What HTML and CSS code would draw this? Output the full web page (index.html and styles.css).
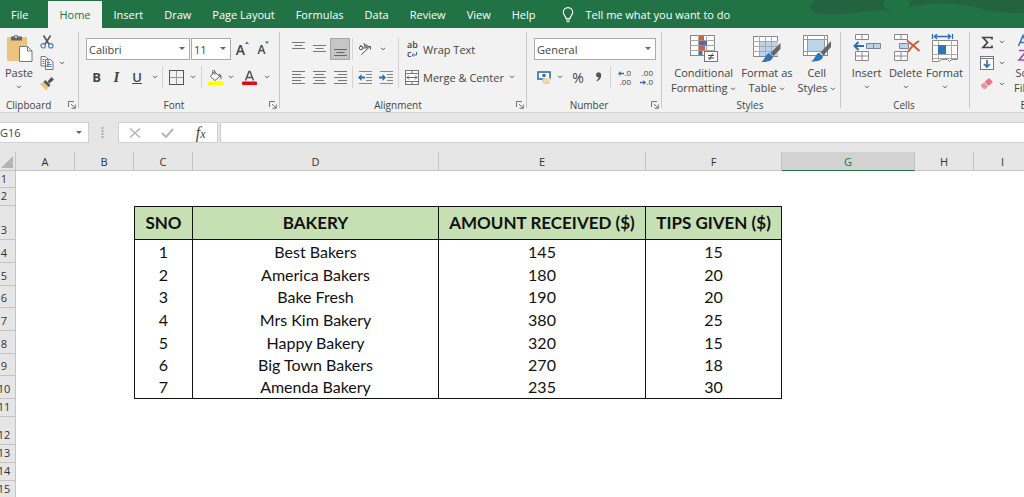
FILE: index.html
```html
<!DOCTYPE html>
<html lang="en">
<head>
<meta charset="utf-8">
<title>Bakery workbook</title>
<link rel="stylesheet" href="styles.css">
</head>
<body>
<svg class="defs" aria-hidden="true">
  <symbol id="chev" viewBox="0 0 6 4"><path d="M1 .8l2 2 2-2" fill="none" stroke="#555"/></symbol>
  <symbol id="launch" viewBox="0 0 8 8"><path d="M.5 6V.5H6M3 3l4 4M7.300 3.500v3.800H3.500" fill="none" stroke="#666" stroke-width=".9"/></symbol>
</svg>

<header class="topbar">
  <svg class="clouds" viewBox="0 0 250 28" aria-hidden="true"><path d="M40 0h70c1 2-2 4 0 6s4 4 8 5c-14-1-26 0-40 2-14 2-30 2-36 0-6-3-2-5-8-7 4-1 5-3 6-6z" fill="#23633f"/><path d="M136 0h114v13c-20 0-34-2-50-6-22-5-46-5-66 1 1-3 2-5 2-8z" fill="#23633f"/></svg>
  <nav class="tabs">
    <button class="tab tab-file">File</button>
    <button class="tab tab-active">Home</button>
    <button class="tab">Insert</button>
    <button class="tab">Draw</button>
    <button class="tab">Page Layout</button>
    <button class="tab">Formulas</button>
    <button class="tab">Data</button>
    <button class="tab">Review</button>
    <button class="tab">View</button>
    <button class="tab">Help</button>
    <button class="tab tell"><svg width="12" height="16" viewBox="0 0 12 16" fill="none" stroke="#fff" stroke-width="1.100"><path d="M4 11.500C4 9 1.300 8.500 1.300 5.300a4.700 4.700 0 0 1 9.400 0C10.700 8.500 8 9 8 11.500zM4 13h4M4.600 14.800h2.800"/></svg><span>Tell me what you want to do</span></button>
  </nav>
</header>

<section class="ribbon" aria-label="Home ribbon">
  <div class="group g-clip">
    <div class="body clip">
      <button class="big">
        <svg width="28" height="28" viewBox="0 0 28 28"><rect x="2" y="3" width="20" height="24" rx="1" fill="#ecc47f"/><path d="M6 2.500h2.500a2.800 2.800 0 0 1 5 0H17v4H6z" fill="#666"/><circle cx="11" cy="3" r="1.100" fill="#eee"/><path d="M14.500 12.500h8l4.500 4.500v10.500H14.500z" fill="#fff" stroke="#777"/><path d="M22.500 12.500V17H27" fill="none" stroke="#777"/></svg>
        <span>Paste</span><svg class="chev"><use href="#chev"/></svg>
      </button>
      <div class="clip-tools">
        <button class="ico" aria-label="Cut"><svg width="14" height="14" viewBox="0 0 14 14" fill="none"><path d="M3.500 .5l5.700 9M10.500 .5l-5.700 9" stroke="#555" stroke-width="1.600"/><circle cx="3.200" cy="10.800" r="2.200" stroke="#4b7fc0" stroke-width="1.200"/><circle cx="10.800" cy="10.800" r="2.200" stroke="#4b7fc0" stroke-width="1.200"/></svg></button>
        <span class="split"><button class="ico" aria-label="Copy"><svg width="14" height="14" viewBox="0 0 14 14" fill="#f8f8f8" stroke="#777"><path d="M1 .5h4.500L8 3v7H1zM5.500 3.500h5L13 6v7.500H5.500z"/><path d="M2.500 3.500h2M2.500 5.500h2M2.500 7.500h2M7 6.500h3M7 8.500h4.500M7 10.500h4.500" stroke="#5d83b5"/></svg></button><button class="drop" aria-label="Copy options"><svg class="chev"><use href="#chev"/></svg></button></span>
        <button class="ico" aria-label="Format painter"><svg width="14" height="14" viewBox="0 0 14 14"><path d="M0 7l4-2 5 4.500-3 4z" fill="#ecc47f"/><path d="M3.500 5l1.800-2L10.500 8l-1.700 2zM7.500 4.500L11.500 0 14 2.500 9.500 6.500z" fill="#555"/></svg></button>
      </div>
    </div>
    <div class="caption"><span>Clipboard</span><button class="launch" aria-label="Clipboard settings"><svg><use href="#launch"/></svg></button></div>
  </div>

  <div class="group g-font">
    <div class="body rows">
      <div class="row font-top">
        <label class="combo font-name"><select aria-label="Font"><option>Calibri</option></select></label>
        <label class="combo font-size"><select aria-label="Font size"><option>11</option></select></label>
        <button class="ico" aria-label="Grow font"><span class="grow">A</span><svg class="mark" width="4" height="12" viewBox="0 0 4 12"><path d="M0 3l2-2.500L4 3z" fill="#41719c"/></svg></button>
        <button class="ico" aria-label="Shrink font"><span class="shrink">A</span><svg class="mark" width="4" height="12" viewBox="0 0 4 12"><path d="M0 .5l2 2.500L4 .5z" fill="#41719c"/></svg></button>
      </div>
      <div class="row font-bottom">
        <button class="ico glyph bold">B</button>
        <button class="ico glyph italic">I</button>
        <button class="ico glyph under">U</button>
        <button class="drop" aria-label="Underline options"><svg class="chev"><use href="#chev"/></svg></button>
        <i class="sep"></i>
        <button class="ico" aria-label="Borders"><svg width="15" height="15" viewBox="0 0 15 15"><path d="M7.500 1v13M1 7.500h13" stroke="#999" fill="none"/><rect x=".5" y=".5" width="14" height="14" fill="none" stroke="#555"/></svg></button>
        <button class="drop" aria-label="Border options"><svg class="chev"><use href="#chev"/></svg></button>
        <i class="sep"></i>
        <button class="ico" aria-label="Fill color"><svg width="15" height="15" viewBox="0 0 15 15"><path d="M6.500 1.500l5 5-4.500 4L2.500 6.500z" fill="#fff" stroke="#666"/><path d="M4.500 4V1.500a1.200 1.200 0 0 1 2.400 0V5" fill="none" stroke="#666"/><path d="M10.500 3.500c3 .5 3.500 3.500 2.500 6.500-.5-2-1.200-3.500-2.500-6.500z" fill="#41719c"/><rect y="11.500" width="15" height="3.500" fill="#ff0"/></svg></button>
        <button class="drop" aria-label="Fill options"><svg class="chev"><use href="#chev"/></svg></button>
        <button class="ico" aria-label="Font color"><svg width="15" height="15" viewBox="0 0 15 15"><path d="M3.500 10.500l3.500-9h1l3.500 9M5 7.500h5" fill="none" stroke="#555" stroke-width="1.500"/><rect y="11.500" width="15" height="3.500" rx="1" fill="#e00b12"/></svg></button>
        <button class="drop" aria-label="Font color options"><svg class="chev"><use href="#chev"/></svg></button>
      </div>
    </div>
    <div class="caption"><span>Font</span><button class="launch" aria-label="Font settings"><svg><use href="#launch"/></svg></button></div>
  </div>

  <div class="group g-align">
    <div class="body align">
      <div class="align-grid">
        <button class="ico" aria-label="Top align"><svg width="13" height="15" viewBox="0 0 13 15"><path d="M0 .5h13M2.500 3.500h8M0 6.500h13" stroke="#777"/></svg></button>
        <button class="ico" aria-label="Middle align"><svg width="13" height="15" viewBox="0 0 13 15"><path d="M0 3.500h13M2.500 6.500h8M0 9.500h13" stroke="#777"/></svg></button>
        <button class="ico pressed" aria-label="Bottom align"><svg width="13" height="15" viewBox="0 0 13 15"><path d="M0 7.500h13M2.500 10.500h8M0 13.500h13" stroke="#666"/></svg></button>
        <i class="sep"></i>
        <button class="ico" aria-label="Orientation"><svg width="14" height="14" viewBox="0 0 14 14" fill="none" stroke="#555"><circle cx="3" cy="6" r="1.700"/><path d="M2.200 2.800l4 4M5.500 1l3.500 5"/><circle cx="8" cy="4.500" r="1.600"/><path d="M3.500 12.500l8.500-8M9.500 4.500H12.500V7.500"/></svg></button>
        <button class="drop" aria-label="Orientation options"><svg class="chev"><use href="#chev"/></svg></button>
        <button class="ico" aria-label="Align left"><svg width="13" height="15" viewBox="0 0 13 15"><path d="M0 1.500h13M0 4.500h9M0 7.500h13M0 10.500h9M0 13.500h13" stroke="#777"/></svg></button>
        <button class="ico" aria-label="Center"><svg width="13" height="15" viewBox="0 0 13 15"><path d="M0 1.500h13M2 4.500h9M0 7.500h13M2 10.500h9M0 13.500h13" stroke="#777"/></svg></button>
        <button class="ico" aria-label="Align right"><svg width="13" height="15" viewBox="0 0 13 15"><path d="M0 1.500h13M4 4.500h9M0 7.500h13M4 10.500h9M0 13.500h13" stroke="#777"/></svg></button>
        <i class="sep"></i>
        <button class="ico" aria-label="Decrease indent"><svg width="14" height="15" viewBox="0 0 14 15"><path d="M1 1.500h13M8 4.500h6M8 7.500h6M8 10.500h6M1 13.500h13" stroke="#888"/><path d="M0 7.500l3.500-3.500v2.500H7v2H3.500V11z" fill="#2e6db4"/></svg></button>
        <button class="ico" aria-label="Increase indent"><svg width="14" height="15" viewBox="0 0 14 15"><path d="M1 1.500h13M8 4.500h6M8 7.500h6M8 10.500h6M1 13.500h13" stroke="#888"/><path d="M7 7.500L3.500 4v2.500H0v2h3.500V11z" fill="#2e6db4"/></svg></button>
      </div>
      <i class="sep sep-tall"></i>
      <div class="rows">
        <button class="wide"><span class="wrap-ico"><b>ab</b><b>c<svg width="6" height="5" viewBox="0 0 6 5"><path d="M5.500 0v3H1M2.500 1.500L1 3l1.500 1.500" fill="none" stroke="#2e6db4"/></svg></b></span>Wrap Text</button>
        <span class="split"><button class="wide"><svg width="14" height="15" viewBox="0 0 14 15"><rect x=".5" y=".5" width="13" height="14" fill="#fff" stroke="#777"/><path d="M0 3.500h14M0 11.500h14M7 0v3M7 12v3" stroke="#777"/><path d="M2 7.500h10M4 5.500l-2 2 2 2M10 5.500l2 2-2 2" fill="none" stroke="#41719c"/></svg>Merge &amp; Center</button><button class="drop" aria-label="Merge options"><svg class="chev"><use href="#chev"/></svg></button></span>
      </div>
    </div>
    <div class="caption"><span>Alignment</span><button class="launch" aria-label="Alignment settings"><svg><use href="#launch"/></svg></button></div>
  </div>

  <div class="group g-number">
    <div class="body rows">
      <label class="combo"><select aria-label="Number format"><option>General</option></select></label>
      <div class="row number-bottom">
        <button class="ico" aria-label="Accounting format"><svg width="15" height="15" viewBox="0 0 15 15"><rect x="1" y="2" width="12" height="7" fill="#fff" stroke="#2e6db4" stroke-width="1.600"/><circle cx="7" cy="5.500" r="1.800" fill="#2e6db4"/><path d="M6 8h7v5l-4 1.500L5 12z" fill="#f0cfa0"/><path d="M8 9h6M7 11h6" stroke="#fae8cc"/></svg></button>
        <button class="drop" aria-label="Accounting options"><svg class="chev"><use href="#chev"/></svg></button>
        <button class="ico percent">%</button>
        <button class="ico" aria-label="Comma style"><svg width="6" height="10" viewBox="0 0 6 10"><path d="M0 2.800A2.500 2.500 0 0 1 5.200 3C5.200 6 3.500 8.300 1 9.200l-.5-1C2 7.300 2.700 6.300 2.800 5.200A2.400 2.400 0 0 1 0 2.800z" fill="#555"/></svg></button>
        <i class="sep"></i>
        <button class="ico dec" aria-label="Increase decimal"><span><svg width="6" height="5" viewBox="0 0 6 5"><path d="M0 2.500L2.500 0v1.800H6v1.400H2.500V5z" fill="#2e6db4"/></svg>.0</span><span>.00</span></button>
        <button class="ico dec" aria-label="Decrease decimal"><span>.00</span><span><svg width="6" height="5" viewBox="0 0 6 5"><path d="M6 2.500L3.500 0v1.800H0v1.400h3.500V5z" fill="#2e6db4"/></svg>.0</span></button>
      </div>
    </div>
    <div class="caption"><span>Number</span><button class="launch" aria-label="Number settings"><svg><use href="#launch"/></svg></button></div>
  </div>

  <div class="group g-styles">
    <div class="body bigs">
      <button class="big">
        <svg width="28" height="28" viewBox="0 0 28 28"><rect x=".5" y="1.500" width="24" height="20" fill="#fff" stroke="#888"/><path d="M8.500 1v20M16.500 1v20M0 6.500h25M0 11.500h25M0 16.500h25" stroke="#aaa"/><path d="M9 1.500h5v5H9zM9 12h6v4.500H9z" fill="#d2603b"/><path d="M9 7h8v4.500H9zM9 17h3.500v4H9z" fill="#4472b0"/><rect x="14.500" y="17.500" width="13" height="10" fill="#fff" stroke="#777"/><path d="M18 21.500h6M18 24h6M22.500 19.500l-3 6.500" stroke="#444"/></svg>
        <span>Conditional</span><span>Formatting <svg class="chev"><use href="#chev"/></svg></span>
      </button>
      <button class="big">
        <svg width="28" height="28" viewBox="0 0 28 28"><rect x=".5" y="2.500" width="24" height="20" fill="#fff" stroke="#888"/><path d="M7 8h18v14H7z" fill="#bdd3ec"/><path d="M6.500 2v20M12.500 2v20M18.500 2v20M0 7.500h25M0 12.500h25M0 17.500h25" stroke="#aaa"/><path d="M27.500 9v6l-7 7-3-3z" fill="#666"/><path d="M16 19l4 4c-1 4-5 5-12 5 4-2 4-7 8-9z" fill="#2e75b6"/></svg>
        <span>Format as</span><span>Table <svg class="chev"><use href="#chev"/></svg></span>
      </button>
      <button class="big">
        <svg width="28" height="28" viewBox="0 0 28 28"><rect x=".5" y="1.500" width="24" height="20" fill="#fff" stroke="#888"/><path d="M5 6h16v11H5z" fill="#bdd3ec"/><path d="M4.500 1v20M21.500 1v20M0 5.500h25M0 17.500h25" stroke="#999"/><path d="M28 7v6l-7.500 8.500-3-3z" fill="#666"/><path d="M16 18.500l4 4c-1 4-5 5-12 5 4-2 4-7 8-9z" fill="#2e75b6"/></svg>
        <span>Cell</span><span>Styles <svg class="chev"><use href="#chev"/></svg></span>
      </button>
    </div>
    <div class="caption"><span>Styles</span></div>
  </div>

  <div class="group g-cells">
    <div class="body bigs">
      <button class="big">
        <svg width="28" height="28" viewBox="0 0 28 28"><path d="M2.500 .5h13v5h-13zM9 .5v5M2.500 17.500h13v9h-13zM9 17.500v9M2.500 22h13" fill="#fff" stroke="#888"/><path d="M13.500 9.500h14v5h-14zM20.500 9.500v5" fill="#bdd3ec" stroke="#7a8794"/><path d="M1 12h10M5.500 8L1.500 12l4 4" fill="none" stroke="#2e6db4" stroke-width="2"/></svg>
        <span>Insert</span><svg class="chev"><use href="#chev"/></svg>
      </button>
      <button class="big">
        <svg width="28" height="28" viewBox="0 0 28 28"><path d="M2.500 .5h13v5h-13zM9 .5v5M2.500 17.500h13v9h-13zM9 17.500v9M2.500 22h13" fill="#fff" stroke="#888"/><path d="M7.500 9.500h9v5h-9z" fill="#bdd3ec" stroke="#7a8794"/><path d="M15 6.500c4 3 8 6.500 12.500 10.500M27 7c-5 3-8 6-11 11" fill="none" stroke="#d95735" stroke-width="2"/></svg>
        <span>Delete</span><svg class="chev"><use href="#chev"/></svg>
      </button>
      <button class="big">
        <svg width="28" height="28" viewBox="0 0 28 28"><path d="M1.500 0v5M21.500 0v5M3 2.500h17M6 0L3.500 2.500 6 5M17 0l2.500 2.500L17 5" fill="none" stroke="#2e6db4" stroke-width="1.300"/><path d="M1.500 6.500h25v19h-6l-2 2-2-2h-6l-3 2h-6z" fill="#fff" stroke="#888"/><path d="M7.500 6.500v20M20.500 6.500v20M1.500 11.500h25M1.500 20.500h25M1.500 24.500h25" stroke="#aaa" fill="none"/><path d="M7 11h8v9H7z" fill="#2e75b6"/></svg>
        <span>Format</span><svg class="chev"><use href="#chev"/></svg>
      </button>
    </div>
    <div class="caption"><span>Cells</span></div>
  </div>

  <div class="group g-edit">
    <div class="body edit">
      <div class="clip-tools">
        <span class="split"><button class="ico" aria-label="AutoSum"><svg width="14" height="13" viewBox="0 0 14 13"><path d="M12 3.500V1.500H3L7.500 6.500l-4.500 5H12v-2" fill="none" stroke="#444" stroke-width="1.700"/></svg></button><button class="drop" aria-label="Sum options"><svg class="chev"><use href="#chev"/></svg></button></span>
        <span class="split"><button class="ico" aria-label="Fill"><svg width="14" height="14" viewBox="0 0 14 14"><rect x=".5" y=".5" width="13" height="13" fill="#fff" stroke="#777"/><path d="M0 2.500h14" stroke="#777"/><path d="M7 4v7M4 8l3 3 3-3" fill="none" stroke="#2e6db4" stroke-width="1.700"/></svg></button><button class="drop" aria-label="Fill options"><svg class="chev"><use href="#chev"/></svg></button></span>
        <span class="split"><button class="ico" aria-label="Clear"><svg width="14" height="14" viewBox="0 0 14 14"><path d="M9 1l4 4-4.500 4-4-4z" fill="#e9768a"/><path d="M4 5.500l4 4L5.500 12h-2L1 9.500V8z" fill="#e995a3"/></svg></button><button class="drop" aria-label="Clear options"><svg class="chev"><use href="#chev"/></svg></button></span>
      </div>
      <button class="big">
        <svg width="28" height="28" viewBox="0 0 28 28" fill="none" stroke-width="1.600"><path d="M1.500 12L6 1.500 10.500 12M3 8.500h6" stroke="#3b74c0"/><path d="M2 16.500h8l-8 9.500h8.500" stroke="#9a4fb8"/><path d="M20 3v20M16 19l4 4 4-4" stroke="#555"/></svg>
        <span>Sort &amp;</span><span>Filter <svg class="chev"><use href="#chev"/></svg></span>
      </button>
    </div>
    <div class="caption"><span>Editing</span></div>
  </div>
</section>

<section class="formula-bar">
  <div class="name-box"><input aria-label="Name box" value="G16"><button class="tri" aria-label="Name list"></button></div>
  <svg class="dots" width="3" height="12" viewBox="0 0 3 12"><path d="M.5 1h2M.5 4h2M.5 7h2M.5 10h2" stroke="#999" stroke-width="1.500"/></svg>
  <div class="entry">
    <button class="ico" aria-label="Cancel"><svg width="12" height="10" viewBox="0 0 12 10"><path d="M1 .5l10 9M11 .5l-10 9" stroke="#b5b5b5" stroke-width="1.500"/></svg></button>
    <button class="ico" aria-label="Enter"><svg width="13" height="10" viewBox="0 0 13 10"><path d="M1 5l4 4 7-8" fill="none" stroke="#b5b5b5" stroke-width="2"/></svg></button>
    <button class="ico fx" aria-label="Insert function">f<small>x</small></button>
  </div>
  <input class="formula" aria-label="Formula">
</section>

<main class="sheet">
  <table>
    <colgroup><col class="w-head"><col class="w-s"><col class="w-s"><col class="w-s"><col class="w-d"><col class="w-e"><col class="w-f"><col class="w-g"><col class="w-s"><col></colgroup>
    <thead>
      <tr><th class="corner"><svg width="12" height="12" viewBox="0 0 12 12"><path d="M12 0v12H0z" fill="#b4b4b4"/></svg></th><th>A</th><th>B</th><th>C</th><th>D</th><th>E</th><th>F</th><th class="current">G</th><th>H</th><th>I</th></tr>
    </thead>
    <tbody>
      <tr><th>1</th><td colspan="9"></td></tr>
      <tr><th>2</th><td colspan="9"></td></tr>
      <tr class="title"><th>3</th><td colspan="2"></td><td class="c first">SNO</td><td class="c">BAKERY</td><td class="c">AMOUNT RECEIVED ($)</td><td class="c">TIPS GIVEN ($)</td><td colspan="3"></td></tr>
      <tr class="data"><th>4</th><td colspan="2"></td><td class="c first">1</td><td class="c">Best Bakers</td><td class="c">145</td><td class="c">15</td><td colspan="3"></td></tr>
      <tr class="data"><th>5</th><td colspan="2"></td><td class="c first">2</td><td class="c">America Bakers</td><td class="c">180</td><td class="c">20</td><td colspan="3"></td></tr>
      <tr class="data short"><th>6</th><td colspan="2"></td><td class="c first">3</td><td class="c">Bake Fresh</td><td class="c">190</td><td class="c">20</td><td colspan="3"></td></tr>
      <tr class="data"><th>7</th><td colspan="2"></td><td class="c first">4</td><td class="c">Mrs Kim Bakery</td><td class="c">380</td><td class="c">25</td><td colspan="3"></td></tr>
      <tr class="data"><th>8</th><td colspan="2"></td><td class="c first">5</td><td class="c">Happy Bakery</td><td class="c">320</td><td class="c">15</td><td colspan="3"></td></tr>
      <tr class="data short"><th>9</th><td colspan="2"></td><td class="c first">6</td><td class="c">Big Town Bakers</td><td class="c">270</td><td class="c">18</td><td colspan="3"></td></tr>
      <tr class="data last"><th>10</th><td colspan="2"></td><td class="c first">7</td><td class="c">Amenda Bakery</td><td class="c">235</td><td class="c">30</td><td colspan="3"></td></tr>
      <tr><th>11</th><td colspan="9"></td></tr>
      <tr class="tall"><th>12</th><td colspan="9"></td></tr>
      <tr><th>13</th><td colspan="9"></td></tr>
      <tr><th>14</th><td colspan="9"></td></tr>
      <tr><th>15</th><td colspan="9"></td></tr>
    </tbody>
  </table>
</main>
</body>
</html>
```

FILE: styles.css
```css
* { box-sizing: border-box; }
html { height: 100%; }
body {
  margin: 0;
  height: 100%;
  overflow: hidden;
  display: flex;
  flex-direction: column;
  background: #fff;
  color: #444;
  font: 11px/15px "Open Sans", "Noto Sans", sans-serif;
}
button, input, select { font: inherit; color: inherit; }
button { margin: 0; padding: 0; border: 0; background: none; white-space: nowrap; }
.defs { display: none; }

/* Tab strip */
.topbar { position: relative; flex: none; height: 28px; background: #217346; }
.clouds { position: absolute; top: 0; right: 0; width: 250px; height: 28px; }
.tabs { position: relative; display: flex; height: 100%; padding-top: 1px; }
.tab { padding: 0 10px 0 11px; color: #fff; }
.tab-file { padding: 0 20px 0 11px; }
.tab-active { padding: 0 11px; margin-right: 1px; background: #f2f2f2; color: #217346; }
.tell { display: flex; align-items: center; gap: 11px; padding-left: 17px; }

/* Ribbon */
.ribbon { flex: none; display: flex; height: 85px; padding-top: 4px; overflow: hidden; background: #f2f2f2; border-bottom: 1px solid #d2d2d2; }
.group { position: relative; flex: none; display: flex; flex-direction: column; justify-content: space-between; }
.group:not(:last-child)::after { content: ""; position: absolute; top: 0; right: 0; bottom: 4px; width: 1px; background: #c8c8c8; }
.g-clip { width: 79px; }
.g-font { width: 201px; }
.g-align { width: 247px; }
.g-number { width: 135px; }
.g-styles { width: 179px; }
.g-cells { width: 129px; }
.g-edit { width: 136px; }
.caption { display: flex; align-items: center; height: 14px; padding-right: 3px; font-size: 10px; line-height: 14px; }
.caption span { flex: 1; text-align: center; }
.g-clip .caption { padding-left: 6px; }
.g-clip .caption span { text-align: left; }
.launch { width: 8px; height: 8px; }
.launch svg { display: block; width: 8px; height: 8px; }
.chev { width: 6px; height: 4px; vertical-align: middle; }
.ico { display: flex; align-items: center; justify-content: center; }
.drop { display: flex; align-items: center; justify-content: center; width: 16px; }
.sep { width: 1px; background: #d4d4d4; }
.split { display: flex; }
.rows { display: grid; grid-template-rows: 22px 22px; gap: 6px; padding-top: 6px; }
.row { display: grid; }
.row .drop { width: auto; }

.big { display: flex; flex-direction: column; align-items: center; }
.big > svg:first-child { margin-bottom: 3px; }
.big > .chev { margin-top: 5px; }
.clip, .edit, .bigs { display: flex; padding-top: 2px; }
.clip .big { width: 38px; }
.clip-tools { display: grid; grid-template-rows: 14px 14px 14px; gap: 7px; padding: 1px 0 0 2px; }
.clip-tools > .ico { justify-self: start; }

.combo { position: relative; display: block; height: 22px; background: #fff; border: 1px solid #ababab; }
.combo select { display: block; width: 100%; height: 100%; padding: 0 2px; border: 0; background: none; appearance: none; }
.combo::after, .tri::after { content: ""; position: absolute; top: 8px; right: 4px; border: 3px solid transparent; border-top-color: #666; border-bottom: 0; }
.font-top { grid-template-columns: 104px 40px 21px 19px; column-gap: 1px; padding-left: 7px; }
.grow, .shrink { font-weight: 600; font-size: 14px; }
.shrink { font-size: 12px; }
.mark { align-self: start; margin-top: 3px; }
.font-bottom { grid-template-columns: 21px 19px 22px 14px 6px 17px 16px 6px 16px 16px 21px 13px; padding-left: 7px; }
.glyph { font-weight: 700; font-size: 13px; }
.italic { font-family: "Liberation Serif", serif; font-style: italic; font-size: 15px; }
.under { font-weight: 600; text-decoration: underline; }

.align { display: flex; }
.align-grid { display: grid; grid-template: 22px 22px / 21px 21px 20px 4px 21px 21px; gap: 6px 0; padding: 6px 0 0 8px; }
.align-grid .sep { margin-left: 2px; }
.pressed { background: #c6c6c6; border: 1px solid #a6a6a6; }
.sep-tall { margin: 5px 6px 0 2px; }
.wide { display: flex; align-items: center; gap: 4px; }
.wrap-ico { display: flex; flex-direction: column; width: 14px; padding-left: 2px; font-size: 9px; line-height: 9px; }
.wrap-ico b { font-weight: 600; text-align: left; }

.g-number .rows { padding-left: 7px; padding-right: 6px; }
.number-bottom { grid-template-columns: 20px 12px 24px 18px 4px 22px 22px; }
.number-bottom .sep { margin-left: 2px; }
.percent { font-size: 14px; }
.dec { flex-direction: column; align-items: flex-end; padding-right: 3px; font-size: 8px; line-height: 9px; }

.g-styles .bigs { padding-left: 9px; gap: 5px; }
.g-styles .big:last-child { padding-right: 8px; }
.g-styles .bigs { justify-content: space-between; }
.g-cells .bigs { padding-left: 7px; gap: 2px; }
.g-cells .big { width: 37px; }
.edit { gap: 4px; padding-left: 8px; }

/* Formula bar */
.formula-bar { flex: none; display: flex; align-items: center; height: 39px; background: #e6e6e6; }
.name-box { position: relative; display: flex; width: 89px; height: 21px; background: #fff; border: 1px solid #d0d0d0; border-left: 0; }
.name-box input { width: 68px; padding: 0; border: 0; background: none; outline: 0; }
.tri { flex: 1; }
.tri::after { top: 8px; right: 6px; }
.dots { margin: 0 14px 0 12px; }
.entry { display: grid; grid-template-columns: 1fr 1fr 1fr; width: 100px; height: 21px; background: #fff; border: 1px solid #d0d0d0; }
.fx { font: italic 16px "Liberation Serif", serif; }
.fx small { font-size: 12px; padding-top: 3px; }
.formula { flex: 1; min-width: 0; height: 21px; margin-left: 2px; border: 1px solid #d0d0d0; border-right: 0; background: #fff; outline: 0; }

/* Sheet */
.sheet { flex: 1; min-height: 0; overflow: hidden; background: #fff; }
table { width: calc(100% + 15px); margin-left: -7px; table-layout: fixed; border-collapse: separate; border-spacing: 0; color: #111; }
.w-head { width: 23px; }
.w-s { width: 59px; }
.w-d { width: 246px; }
.w-e { width: 207px; }
.w-f { width: 136px; }
.w-g { width: 133px; }
th, td { padding: 0; overflow: hidden; white-space: nowrap; }
th { background: #e6e6e6; color: #333; font-weight: 400; }
thead th { height: 19px; padding-top: 1px; border-right: 1px solid #c4c4c4; border-bottom: 1px solid #c4c4c4; }
thead .corner { text-align: right; line-height: 0; padding-right: 2px; }
thead .current { background: #d2d2d2; color: #217346; border-bottom: 1px solid #217346; }
tbody th { height: 18px; padding-bottom: 2px; border-right: 1px solid #c4c4c4; border-bottom: 1px solid #c4c4c4; vertical-align: bottom; }
tbody tr:first-child th { height: 17px; padding-bottom: 1px; }
.title th { height: 34px; }
.data th { height: 23px; }
.short th { height: 22px; }
.tall th { height: 28px; }
.c { border-right: 1px solid #111; text-align: center; font: 16px/20px Lato, "Open Sans", sans-serif; }
.first { border-left: 1px solid #111; }
.title .c { background: #c6e0b4; border-top: 1px solid #111; border-bottom: 1px solid #111; font-weight: 700; font-size: 17px; }
.last .c { border-bottom: 1px solid #111; }
```
